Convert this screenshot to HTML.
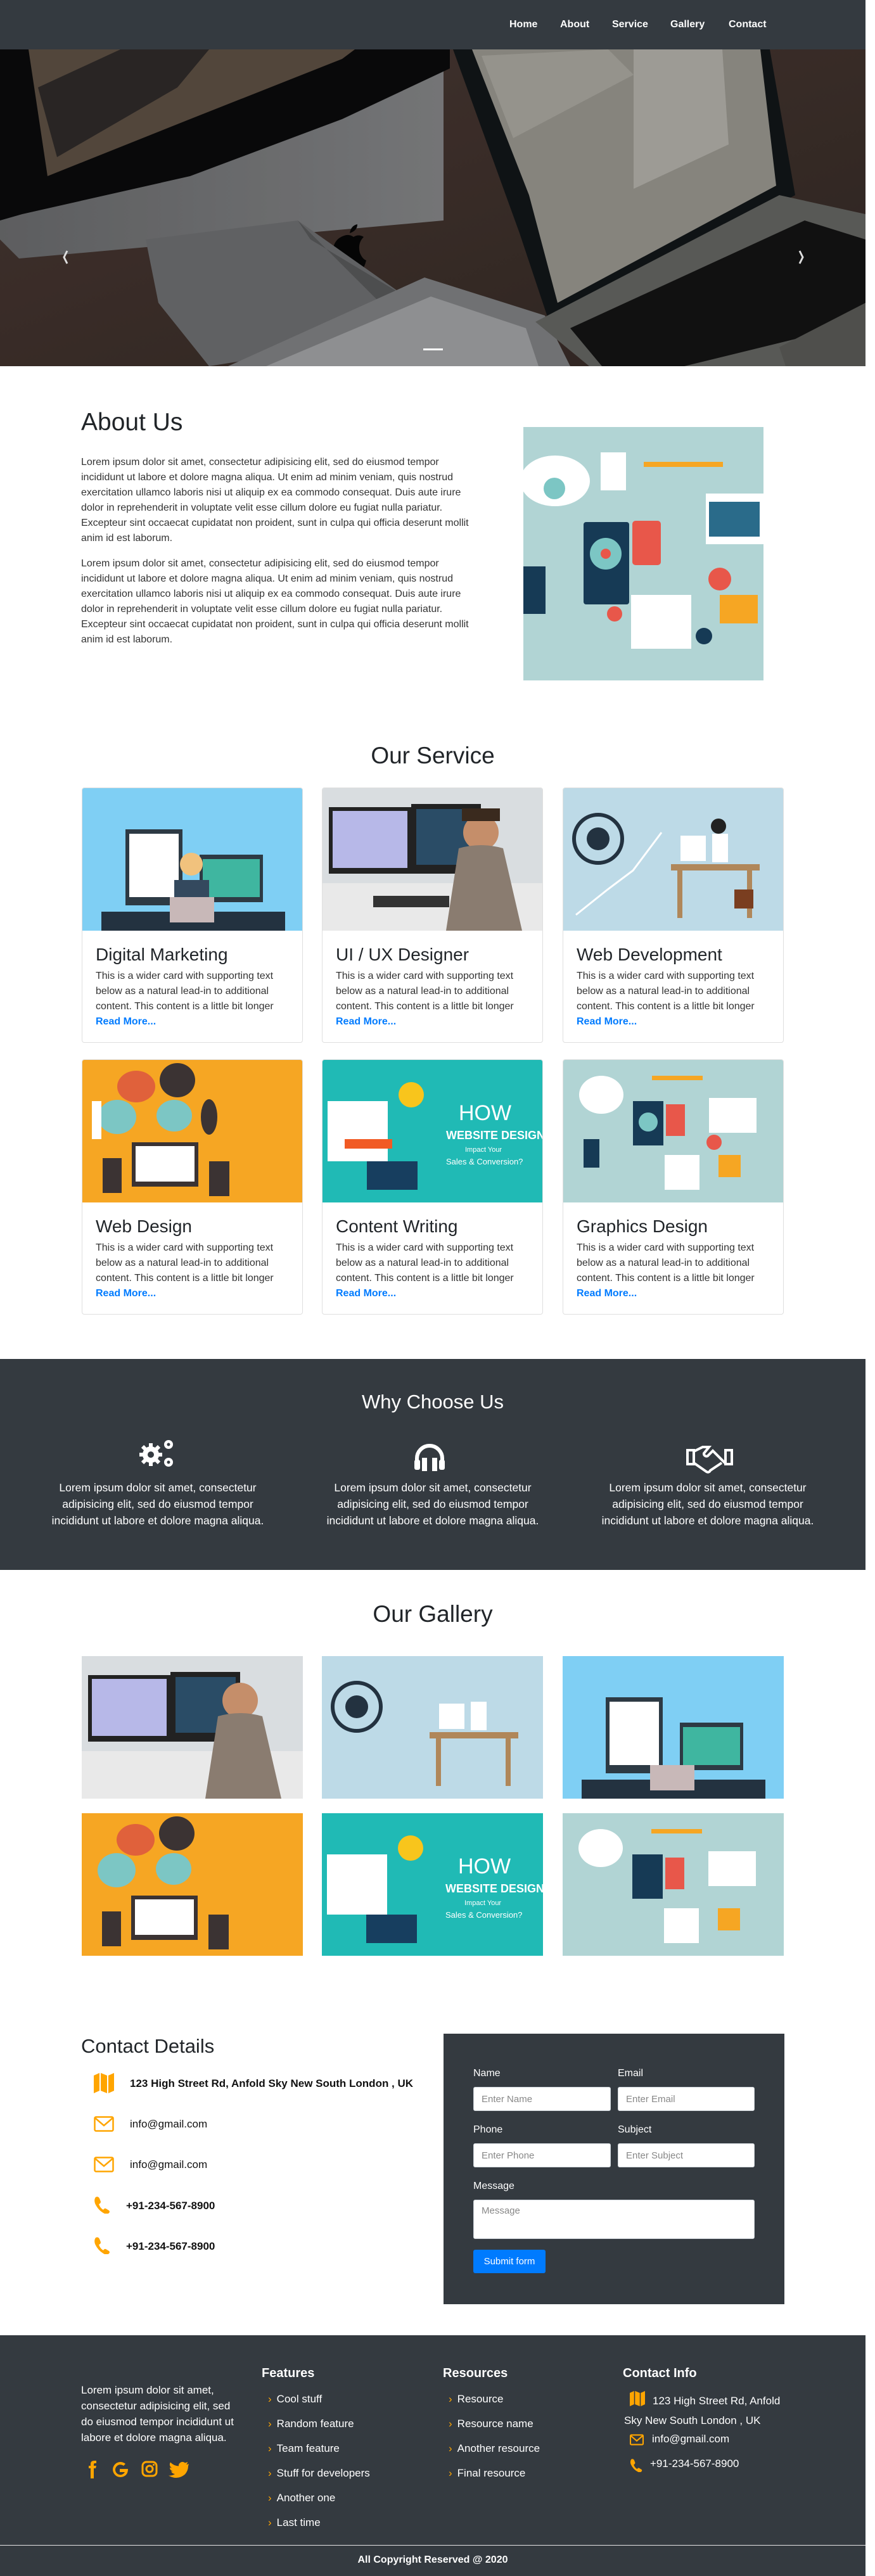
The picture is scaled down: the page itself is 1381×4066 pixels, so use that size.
<!DOCTYPE html>
<html><head><meta charset="utf-8">
<style>
*{box-sizing:border-box;margin:0;padding:0}
html,body{width:1381px;height:4066px;background:#fff;overflow:hidden}
body{font-family:"Liberation Sans",sans-serif;color:#212529;position:relative}
.a{position:absolute}
.dark{background:#343a40}
.nav a{position:absolute;top:30px;color:#fff;font-weight:bold;font-size:16px;text-decoration:none}
h2{font-weight:normal}
.card{position:absolute;width:349px;height:403px;border:1px solid #dfdfdf;border-radius:4px;overflow:hidden;background:#fff}
.card .img{position:absolute;left:0;top:0;width:349px;height:225px;overflow:hidden}
.card h3{position:absolute;left:21px;top:247px;font-size:28px;font-weight:normal;color:#212529;white-space:nowrap}
.card p{position:absolute;left:21px;top:285px;width:325px;font-size:16px;line-height:24px;color:#333;white-space:nowrap}
.card b{color:#007bff;font-size:16px}
.g{position:absolute;width:349px;height:225px;overflow:hidden}
.wt{position:absolute;width:420px;text-align:center;color:#fff;font-size:17.5px;line-height:26px;white-space:nowrap}
.ci{position:absolute;left:205px;font-size:17px;font-weight:bold;color:#111}
.lbl{position:absolute;color:#fff;font-size:16px}
.inp{position:absolute;background:#fff;border:1px solid #ced4da;border-radius:3px;height:38px;color:#888;font-size:15px;padding:10px 12px}
.fh{position:absolute;top:3735px;color:#fff;font-size:20px;font-weight:bold}
.fl{position:absolute;color:#fff;font-size:17px}
.fl span{color:#ffa500;margin-right:8px}
</style></head><body>

<!-- NAV -->
<div class="a dark nav" style="left:0;top:0;width:1366px;height:78px">
<a style="left:804px">Home</a><a style="left:884px">About</a><a style="left:966px">Service</a><a style="left:1058px">Gallery</a><a style="left:1150px">Contact</a>
</div>

<!-- HERO -->
<div class="a" style="left:0;top:78px;width:1366px;height:500px;overflow:hidden;background:#3e302c">
<svg width="1366" height="500" viewBox="0 0 1366 500">
<defs>
<linearGradient id="wd" x1="0" y1="0" x2="1" y2="1"><stop offset="0" stop-color="#4b3a34"/><stop offset="1" stop-color="#342925"/></linearGradient>
<linearGradient id="im" x1="0" y1="0" x2="1" y2="0"><stop offset="0" stop-color="#6a6b6d"/><stop offset="1" stop-color="#848587"/></linearGradient>
</defs>
<rect width="1366" height="500" fill="url(#wd)"/>
<polygon points="0,0 700,0 700,270 30,330 0,300" fill="url(#im)"/>
<polygon points="0,0 710,0 710,30 540,110 300,200 35,260 0,270" fill="#0b0b0c"/>
<polygon points="45,0 560,0 540,15 300,110 75,200" fill="#5e5044"/>
<polygon points="60,60 190,0 330,0 280,60 90,170" fill="#2f2b29"/>
<path d="M528 342 q-10 -40 15 -48 q8 -3 15 2 q8 -5 16 0 q-10 10 -6 25 q4 10 10 12 q-5 20 -20 30 q-6 0 -8 -3 q-5 4 -10 2 q-10 -8 -12 -20z M552 290 q2 -12 12 -14 q0 10 -12 14z" fill="#060606"/>
<polygon points="230,300 470,270 640,390 520,470 330,500 250,400" fill="#6e6f71"/>
<polygon points="470,270 490,300 640,390 620,420" fill="#58595b"/>
<polygon points="360,500 670,360 860,420 900,500" fill="#808183"/>
<polygon points="420,500 680,390 830,440 850,500" fill="#a2a3a5"/>
<polygon points="715,0 1215,0 1255,230 870,440 820,290" fill="#121618"/>
<polygon points="745,0 1200,0 1225,215 880,400 835,230" fill="#99978f"/>
<polygon points="760,10 960,0 1000,40 810,140" fill="#aaa8a0"/>
<polygon points="1000,0 1140,0 1150,150 1000,220" fill="#b3b1aa"/>
<polygon points="845,430 1230,230 1366,260 1366,500 930,500" fill="#656662"/>
<polygon points="900,440 1270,270 1366,300 1366,430 1080,500 950,500" fill="#141414"/>
<polygon points="1230,470 1366,400 1366,500 1240,500" fill="#5a5b57"/>
<rect width="1366" height="500" fill="#000" opacity="0.12"/>
<path d="M106 318 l-5 10 l5 10" stroke="#ddd" stroke-width="3" fill="none"/>
<path d="M1262 318 l5 10 l-5 10" stroke="#ddd" stroke-width="3" fill="none"/>
<rect x="668" y="472" width="31" height="3" fill="#fff"/>
</svg>
</div>

<!-- ABOUT -->
<h2 class="a" style="left:128px;top:645px;font-size:39px;font-weight:500">About Us</h2>
<div class="a" style="left:128px;top:718px;width:700px;font-size:16px;line-height:24px;color:#333;white-space:nowrap">
<p style="margin-bottom:16px">Lorem ipsum dolor sit amet, consectetur adipisicing elit, sed do eiusmod tempor<br>incididunt ut labore et dolore magna aliqua. Ut enim ad minim veniam, quis nostrud<br>exercitation ullamco laboris nisi ut aliquip ex ea commodo consequat. Duis aute irure<br>dolor in reprehenderit in voluptate velit esse cillum dolore eu fugiat nulla pariatur.<br>Excepteur sint occaecat cupidatat non proident, sunt in culpa qui officia deserunt mollit<br>anim id est laborum.</p>
<p>Lorem ipsum dolor sit amet, consectetur adipisicing elit, sed do eiusmod tempor<br>incididunt ut labore et dolore magna aliqua. Ut enim ad minim veniam, quis nostrud<br>exercitation ullamco laboris nisi ut aliquip ex ea commodo consequat. Duis aute irure<br>dolor in reprehenderit in voluptate velit esse cillum dolore eu fugiat nulla pariatur.<br>Excepteur sint occaecat cupidatat non proident, sunt in culpa qui officia deserunt mollit<br>anim id est laborum.</p>
</div>
<div class="a" style="left:826px;top:674px;width:379px;height:400px;background:#b1d4d4;overflow:hidden">
<svg width="379" height="400"><ellipse cx="50" cy="85" rx="55" ry="40" fill="#fff"/><circle cx="49" cy="97" r="17" fill="#7cc6c4"/><rect x="122" y="40" width="40" height="60" fill="#fff"/><rect x="190" y="55" width="125" height="8" fill="#f6a623"/><rect x="95" y="150" width="72" height="130" rx="4" fill="#163a55"/><circle cx="130" cy="200" r="25" fill="#7cc6c4"/><circle cx="130" cy="200" r="8" fill="#e8574a"/><rect x="172" y="148" width="45" height="70" rx="5" fill="#e8574a"/><rect x="288" y="105" width="91" height="80" fill="#fff"/><rect x="293" y="118" width="80" height="55" fill="#2a6b8a"/><rect x="170" y="265" width="95" height="85" fill="#fff"/><rect x="310" y="265" width="60" height="45" fill="#f6a623"/><circle cx="310" cy="240" r="18" fill="#e8574a"/><circle cx="285" cy="330" r="13" fill="#163a55"/><circle cx="144" cy="295" r="12" fill="#e8574a"/><rect x="0" y="220" width="35" height="75" fill="#163a55"/></svg>
</div>

<!-- SERVICE -->
<h2 class="a" style="left:0;width:1366px;text-align:center;top:1172px;font-size:37px;font-weight:500">Our Service</h2>

<div class="card" style="left:129px;top:1243px"><div class="img" style="background:#7fcff4"><svg width="349" height="225"><rect x="68" y="65" width="90" height="120" fill="#2d3a44"/><rect x="74" y="72" width="78" height="100" fill="#fff"/><rect x="185" y="105" width="100" height="75" fill="#2d3a44"/><rect x="190" y="112" width="90" height="60" fill="#3fb6a0"/><rect x="30" y="195" width="290" height="30" fill="#233240"/><circle cx="172" cy="120" r="18" fill="#f1c27d"/><rect x="145" y="145" width="55" height="55" fill="#34495e"/><rect x="138" y="172" width="70" height="40" fill="#c8b8b8"/></svg></div><h3>Digital Marketing</h3><p>This is a wider card with supporting text<br>below as a natural lead-in to additional<br>content. This content is a little bit longer<br><b>Read More...</b></p></div>

<div class="card" style="left:508px;top:1243px"><div class="img" style="background:#d9dde0"><svg width="349" height="225"><rect x="10" y="30" width="130" height="105" fill="#222"/><rect x="16" y="36" width="118" height="90" fill="#b7b8e8"/><rect x="140" y="25" width="110" height="110" fill="#222"/><rect x="148" y="33" width="95" height="88" fill="#2a4c66"/><rect x="0" y="150" width="349" height="75" fill="#e9e9e9"/><rect x="80" y="170" width="120" height="18" fill="#333"/><circle cx="250" cy="70" r="28" fill="#c58e6a"/><path d="M215 95 q35 -10 70 0 l30 130 h-120z" fill="#8a7c70"/><rect x="220" y="32" width="60" height="20" fill="#3a2a1e"/></svg></div><h3>UI / UX Designer</h3><p>This is a wider card with supporting text<br>below as a natural lead-in to additional<br>content. This content is a little bit longer<br><b>Read More...</b></p></div>

<div class="card" style="left:888px;top:1243px"><div class="img" style="background:#bddae7"><svg width="349" height="225"><circle cx="55" cy="80" r="38" fill="none" stroke="#233240" stroke-width="6"/><circle cx="55" cy="80" r="18" fill="#233240"/><rect x="170" y="120" width="140" height="10" fill="#b0875a"/><rect x="180" y="125" width="8" height="80" fill="#b0875a"/><rect x="290" y="125" width="8" height="80" fill="#b0875a"/><rect x="185" y="75" width="40" height="40" fill="#fff"/><circle cx="245" cy="60" r="12" fill="#222"/><rect x="235" y="72" width="25" height="45" fill="#fff"/><rect x="270" y="160" width="30" height="30" fill="#7a3e20"/><path d="M20 200 l50 -40 l40 -30 l45 -60" stroke="#fff" stroke-width="3" fill="none"/></svg></div><h3>Web Development</h3><p>This is a wider card with supporting text<br>below as a natural lead-in to additional<br>content. This content is a little bit longer<br><b>Read More...</b></p></div>

<div class="card" style="left:129px;top:1672px"><div class="img" style="background:#f6a623"><svg width="349" height="225"><ellipse cx="85" cy="42" rx="30" ry="25" fill="#e0613b"/><ellipse cx="150" cy="32" rx="28" ry="27" fill="#3b3333"/><ellipse cx="55" cy="90" rx="30" ry="27" fill="#7cc6c4"/><ellipse cx="145" cy="88" rx="28" ry="25" fill="#7cc6c4"/><ellipse cx="200" cy="90" rx="13" ry="28" fill="#3b3333"/><rect x="78" y="130" width="105" height="70" fill="#3b3333"/><rect x="84" y="136" width="93" height="56" fill="#fff"/><rect x="32" y="155" width="30" height="55" fill="#3b3333"/><rect x="200" y="160" width="32" height="55" fill="#3b3333"/><rect x="15" y="65" width="15" height="60" fill="#fff"/></svg></div><h3>Web Design</h3><p>This is a wider card with supporting text<br>below as a natural lead-in to additional<br>content. This content is a little bit longer<br><b>Read More...</b></p></div>

<div class="card" style="left:508px;top:1672px"><div class="img" style="background:#20bab5"><svg width="349" height="225"><rect x="8" y="65" width="95" height="95" fill="#fff"/><circle cx="140" cy="55" r="20" fill="#f8c51c"/><rect x="35" y="125" width="75" height="15" fill="#f15a24"/><rect x="70" y="160" width="80" height="45" fill="#173e5f"/><text x="215" y="95" fill="#fff" font-size="34" font-family="Liberation Sans">HOW</text><text x="195" y="125" fill="#fff" font-size="18" font-weight="bold" font-family="Liberation Sans">WEBSITE DESIGN</text><text x="225" y="145" fill="#fff" font-size="11" font-family="Liberation Sans">Impact Your</text><text x="195" y="165" fill="#fff" font-size="13" font-family="Liberation Sans">Sales &amp; Conversion?</text></svg></div><h3>Content Writing</h3><p>This is a wider card with supporting text<br>below as a natural lead-in to additional<br>content. This content is a little bit longer<br><b>Read More...</b></p></div>

<div class="card" style="left:888px;top:1672px"><div class="img" style="background:#b1d4d4"><svg width="349" height="225"><ellipse cx="60" cy="55" rx="35" ry="30" fill="#fff"/><rect x="110" y="65" width="48" height="70" fill="#163a55"/><circle cx="134" cy="98" r="15" fill="#7cc6c4"/><rect x="162" y="70" width="30" height="50" fill="#e8574a"/><rect x="230" y="60" width="75" height="55" fill="#fff"/><rect x="160" y="150" width="55" height="55" fill="#fff"/><rect x="245" y="150" width="35" height="35" fill="#f6a623"/><circle cx="238" cy="130" r="12" fill="#e8574a"/><rect x="32" y="125" width="25" height="45" fill="#163a55"/><rect x="140" y="25" width="80" height="7" fill="#f6a623"/></svg></div><h3>Graphics Design</h3><p>This is a wider card with supporting text<br>below as a natural lead-in to additional<br>content. This content is a little bit longer<br><b>Read More...</b></p></div>

<!-- WHY -->
<div class="a dark" style="left:0;top:2145px;width:1366px;height:333px"></div>
<h2 class="a" style="left:0;width:1366px;text-align:center;top:2195px;font-size:31px;color:#fff;font-weight:500">Why Choose Us</h2>
<svg class="a" style="left:218px;top:2268px" width="60" height="52" viewBox="0 0 60 52" fill="#fff"><circle cx="20" cy="28" r="13"/><g stroke="#fff" stroke-width="6"><line x1="20" y1="10" x2="20" y2="46"/><line x1="2" y1="28" x2="38" y2="28"/><line x1="7" y1="15" x2="33" y2="41"/><line x1="7" y1="41" x2="33" y2="15"/></g><circle cx="20" cy="28" r="5" fill="#343a40"/><circle cx="48" cy="12" r="7"/><circle cx="48" cy="12" r="2.5" fill="#343a40"/><circle cx="48" cy="40" r="7"/><circle cx="48" cy="40" r="2.5" fill="#343a40"/></svg>
<svg class="a" style="left:652px;top:2276px" width="52" height="46" viewBox="0 0 52 46"><path d="M6 36 V26 a20 20 0 0 1 40 0 V36" stroke="#fff" stroke-width="6" fill="none"/><rect x="2" y="28" width="9" height="16" rx="3" fill="#fff"/><rect x="14" y="25" width="8" height="21" fill="#fff"/><rect x="30" y="25" width="8" height="21" fill="#fff"/><rect x="41" y="28" width="9" height="16" rx="3" fill="#fff"/></svg>
<svg class="a" style="left:1083px;top:2281px" width="74" height="46" viewBox="0 0 74 46" fill="none" stroke="#fff" stroke-width="4"><path d="M2 8 h10 v22 h-10z"/><path d="M62 8 h10 v22 h-10z"/><path d="M12 10 l14 -7 h10 l-8 10 a4 4 0 0 0 6 4 l8 -8 l20 20"/><path d="M12 28 l20 14 a4 4 0 0 0 6 -2 l18 -12"/></svg>
<div class="wt" style="left:39px;top:2335px">Lorem ipsum dolor sit amet, consectetur<br>adipisicing elit, sed do eiusmod tempor<br>incididunt ut labore et dolore magna aliqua.</div>
<div class="wt" style="left:473px;top:2335px">Lorem ipsum dolor sit amet, consectetur<br>adipisicing elit, sed do eiusmod tempor<br>incididunt ut labore et dolore magna aliqua.</div>
<div class="wt" style="left:907px;top:2335px">Lorem ipsum dolor sit amet, consectetur<br>adipisicing elit, sed do eiusmod tempor<br>incididunt ut labore et dolore magna aliqua.</div>

<!-- GALLERY -->
<h2 class="a" style="left:0;width:1366px;text-align:center;top:2527px;font-size:37px;font-weight:500">Our Gallery</h2>
<div class="g" style="left:129px;top:2614px;background:#d9dde0"><svg width="349" height="225"><rect x="10" y="30" width="130" height="105" fill="#222"/><rect x="16" y="36" width="118" height="90" fill="#b7b8e8"/><rect x="140" y="25" width="110" height="110" fill="#222"/><rect x="148" y="33" width="95" height="88" fill="#2a4c66"/><rect x="0" y="150" width="349" height="75" fill="#e9e9e9"/><circle cx="250" cy="70" r="28" fill="#c58e6a"/><path d="M215 95 q35 -10 70 0 l30 130 h-120z" fill="#8a7c70"/></svg></div>
<div class="g" style="left:508px;top:2614px;background:#bddae7"><svg width="349" height="225"><circle cx="55" cy="80" r="38" fill="none" stroke="#233240" stroke-width="6"/><circle cx="55" cy="80" r="18" fill="#233240"/><rect x="170" y="120" width="140" height="10" fill="#b0875a"/><rect x="180" y="125" width="8" height="80" fill="#b0875a"/><rect x="290" y="125" width="8" height="80" fill="#b0875a"/><rect x="185" y="75" width="40" height="40" fill="#fff"/><rect x="235" y="72" width="25" height="45" fill="#fff"/></svg></div>
<div class="g" style="left:888px;top:2614px;background:#7fcff4"><svg width="349" height="225"><rect x="68" y="65" width="90" height="120" fill="#2d3a44"/><rect x="74" y="72" width="78" height="100" fill="#fff"/><rect x="185" y="105" width="100" height="75" fill="#2d3a44"/><rect x="190" y="112" width="90" height="60" fill="#3fb6a0"/><rect x="30" y="195" width="290" height="30" fill="#233240"/><rect x="138" y="172" width="70" height="40" fill="#c8b8b8"/></svg></div>
<div class="g" style="left:129px;top:2862px;background:#f6a623"><svg width="349" height="225"><ellipse cx="85" cy="42" rx="30" ry="25" fill="#e0613b"/><ellipse cx="150" cy="32" rx="28" ry="27" fill="#3b3333"/><ellipse cx="55" cy="90" rx="30" ry="27" fill="#7cc6c4"/><ellipse cx="145" cy="88" rx="28" ry="25" fill="#7cc6c4"/><rect x="78" y="130" width="105" height="70" fill="#3b3333"/><rect x="84" y="136" width="93" height="56" fill="#fff"/><rect x="32" y="155" width="30" height="55" fill="#3b3333"/><rect x="200" y="160" width="32" height="55" fill="#3b3333"/></svg></div>
<div class="g" style="left:508px;top:2862px;background:#20bab5"><svg width="349" height="225"><rect x="8" y="65" width="95" height="95" fill="#fff"/><circle cx="140" cy="55" r="20" fill="#f8c51c"/><rect x="70" y="160" width="80" height="45" fill="#173e5f"/><text x="215" y="95" fill="#fff" font-size="34" font-family="Liberation Sans">HOW</text><text x="195" y="125" fill="#fff" font-size="18" font-weight="bold" font-family="Liberation Sans">WEBSITE DESIGN</text><text x="225" y="145" fill="#fff" font-size="11" font-family="Liberation Sans">Impact Your</text><text x="195" y="165" fill="#fff" font-size="13" font-family="Liberation Sans">Sales &amp; Conversion?</text></svg></div>
<div class="g" style="left:888px;top:2862px;background:#b1d4d4"><svg width="349" height="225"><ellipse cx="60" cy="55" rx="35" ry="30" fill="#fff"/><rect x="110" y="65" width="48" height="70" fill="#163a55"/><rect x="162" y="70" width="30" height="50" fill="#e8574a"/><rect x="230" y="60" width="75" height="55" fill="#fff"/><rect x="160" y="150" width="55" height="55" fill="#fff"/><rect x="245" y="150" width="35" height="35" fill="#f6a623"/><rect x="140" y="25" width="80" height="7" fill="#f6a623"/></svg></div>

<!-- CONTACT -->
<h2 class="a" style="left:128px;top:3212px;font-size:31px;font-weight:500">Contact Details</h2>
<svg class="a" style="left:148px;top:3272px" width="32" height="32" viewBox="0 0 32 32" fill="#ffa500"><path d="M0 4 l9 -4 v28 l-9 4z"/><path d="M11 0 l10 4 v28 l-10 -4z"/><path d="M23 4 l9 -4 v28 l-9 4z"/></svg>
<div class="ci" style="top:3279px">123 High Street Rd, Anfold Sky New South London , UK</div>
<svg class="a" style="left:148px;top:3340px" width="32" height="25" viewBox="0 0 32 25" fill="none" stroke="#ffa500" stroke-width="2.5"><rect x="1.5" y="1.5" width="29" height="22" rx="2"/><path d="M2 3 l14 12 l14 -12"/></svg>
<div class="ci" style="top:3343px;font-weight:normal">info@gmail.com</div>
<svg class="a" style="left:148px;top:3404px" width="32" height="25" viewBox="0 0 32 25" fill="none" stroke="#ffa500" stroke-width="2.5"><rect x="1.5" y="1.5" width="29" height="22" rx="2"/><path d="M2 3 l14 12 l14 -12"/></svg>
<div class="ci" style="top:3407px;font-weight:normal">info@gmail.com</div>
<svg class="a" style="left:148px;top:3466px" width="26" height="28" viewBox="0 0 26 28" fill="#ffa500"><path d="M3 2 q4 -2 6 2 l2 5 q0 3 -3 4 q2 6 7 9 q2 -3 4 -2 l5 3 q2 2 0 4 q-3 3 -7 1 q-10 -5 -15 -16 q-2 -6 1 -10z"/></svg>
<div class="ci" style="top:3472px;left:199px">+91-234-567-8900</div>
<svg class="a" style="left:148px;top:3530px" width="26" height="28" viewBox="0 0 26 28" fill="#ffa500"><path d="M3 2 q4 -2 6 2 l2 5 q0 3 -3 4 q2 6 7 9 q2 -3 4 -2 l5 3 q2 2 0 4 q-3 3 -7 1 q-10 -5 -15 -16 q-2 -6 1 -10z"/></svg>
<div class="ci" style="top:3536px;left:199px">+91-234-567-8900</div>

<div class="a dark" style="left:700px;top:3210px;width:538px;height:427px"></div>
<div class="lbl" style="left:747px;top:3264px">Name</div>
<div class="lbl" style="left:975px;top:3264px">Email</div>
<div class="inp" style="left:747px;top:3294px;width:217px">Enter Name</div>
<div class="inp" style="left:975px;top:3294px;width:216px">Enter Email</div>
<div class="lbl" style="left:747px;top:3353px">Phone</div>
<div class="lbl" style="left:975px;top:3353px">Subject</div>
<div class="inp" style="left:747px;top:3383px;width:217px">Enter Phone</div>
<div class="inp" style="left:975px;top:3383px;width:216px">Enter Subject</div>
<div class="lbl" style="left:747px;top:3442px">Message</div>
<div class="inp" style="left:747px;top:3472px;width:444px;height:62px;padding-top:8px">Message</div>
<div class="a" style="left:747px;top:3551px;width:114px;height:37px;background:#007bff;border-radius:3px;color:#fff;font-size:15px;line-height:37px;text-align:center">Submit form</div>

<!-- FOOTER -->
<div class="a dark" style="left:0;top:3686px;width:1366px;height:380px"></div>
<div class="a" style="left:0;top:4017px;width:1366px;height:1px;background:#e5e5e5"></div>
<div class="a" style="left:128px;top:3760px;width:280px;color:#fff;font-size:17px;line-height:25px;white-space:nowrap">Lorem ipsum dolor sit amet,<br>consectetur adipisicing elit, sed<br>do eiusmod tempor incididunt ut<br>labore et dolore magna aliqua.</div>
<svg class="a" style="left:138px;top:3884px" width="165" height="28" viewBox="0 0 165 28" fill="#ffa500"><path d="M5 28 V12 H2 V8 H5 V5 q0 -5 6 -5 h3 v4 h-2 q-2 0 -2 2 v2 h4 l-1 4 h-3 v16z"/><path d="M51 13 h13 q0 12 -12 13 a12 12 0 1 1 8 -21 l-3 3 a8 8 0 1 0 2 10 h-8z"/><rect x="87" y="2" width="22" height="22" rx="6" fill="none" stroke="#ffa500" stroke-width="3"/><circle cx="98" cy="13" r="5" fill="none" stroke="#ffa500" stroke-width="3"/><circle cx="104.5" cy="6.5" r="1.5"/><path d="M160 5 q-2 1 -4 1 q2 -2 2 -4 q-2 1 -4 1.5 a6 6 0 0 0 -10 5 q-8 -0.5 -13 -6 q-3 5 2 9 q-1.5 0 -3 -1 q0 5 5 6 q-1.5 0.5 -3 0 q1.5 4 6 4.5 q-4 3 -10 2.5 q14 8 26 -2 q5 -6 5 -13z"/></svg>

<div class="fh" style="left:413px">Features</div>
<div class="fl" style="left:423px;top:3777px"><span>›</span>Cool stuff</div>
<div class="fl" style="left:423px;top:3816px"><span>›</span>Random feature</div>
<div class="fl" style="left:423px;top:3855px"><span>›</span>Team feature</div>
<div class="fl" style="left:423px;top:3894px"><span>›</span>Stuff for developers</div>
<div class="fl" style="left:423px;top:3933px"><span>›</span>Another one</div>
<div class="fl" style="left:423px;top:3972px"><span>›</span>Last time</div>

<div class="fh" style="left:699px">Resources</div>
<div class="fl" style="left:708px;top:3777px"><span>›</span>Resource</div>
<div class="fl" style="left:708px;top:3816px"><span>›</span>Resource name</div>
<div class="fl" style="left:708px;top:3855px"><span>›</span>Another resource</div>
<div class="fl" style="left:708px;top:3894px"><span>›</span>Final resource</div>

<div class="fh" style="left:983px">Contact Info</div>
<svg class="a" style="left:994px;top:3774px" width="24" height="24" viewBox="0 0 32 32" fill="#ffa500"><path d="M0 4 l9 -4 v28 l-9 4z"/><path d="M11 0 l10 4 v28 l-10 -4z"/><path d="M23 4 l9 -4 v28 l-9 4z"/></svg>
<div class="fl" style="left:985px;top:3774px;line-height:31px;white-space:nowrap"><span style="margin-left:45px;color:#fff;margin-right:0">123 High Street Rd, Anfold</span><br>Sky New South London , UK</div>
<svg class="a" style="left:994px;top:3842px" width="22" height="18" viewBox="0 0 32 25" fill="none" stroke="#ffa500" stroke-width="3"><rect x="1.5" y="1.5" width="29" height="22" rx="2"/><path d="M2 3 l14 12 l14 -12"/></svg>
<div class="fl" style="left:1029px;top:3840px">info@gmail.com</div>
<svg class="a" style="left:994px;top:3880px" width="20" height="22" viewBox="0 0 26 28" fill="#ffa500"><path d="M3 2 q4 -2 6 2 l2 5 q0 3 -3 4 q2 6 7 9 q2 -3 4 -2 l5 3 q2 2 0 4 q-3 3 -7 1 q-10 -5 -15 -16 q-2 -6 1 -10z"/></svg>
<div class="fl" style="left:1026px;top:3879px">+91-234-567-8900</div>

<div class="a" style="left:0;width:1366px;top:4032px;text-align:center;color:#fff;font-size:16px;font-weight:bold">All Copyright Reserved @ 2020</div>
</body></html>
